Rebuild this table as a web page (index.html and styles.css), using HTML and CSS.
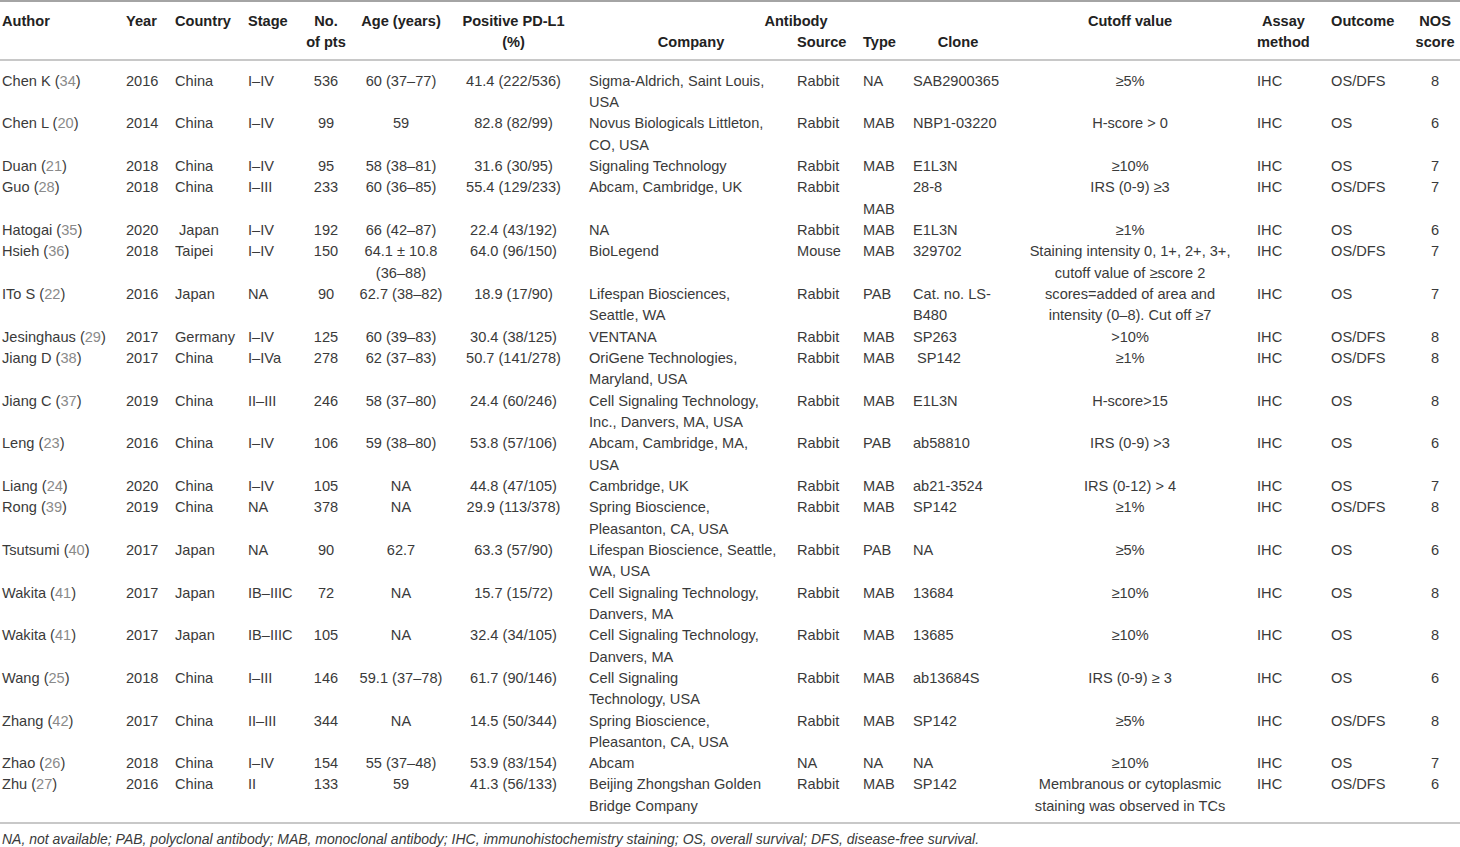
FILE: index.html
```html
<!DOCTYPE html>
<html lang="en">
<head>
<meta charset="utf-8">
<title>Table</title>
<link rel="stylesheet" href="styles.css">
</head>
<body>
<table class="tbl">
<colgroup>
<col class="c-author"><col class="c-year"><col class="c-country"><col class="c-stage"><col class="c-pts"><col class="c-age"><col class="c-pd"><col class="c-company"><col class="c-source"><col class="c-type"><col class="c-clone"><col class="c-cut"><col class="c-assay"><col class="c-out"><col class="c-nos">
</colgroup>
<thead>
<tr class="h1">
<th rowspan="2" class="l hb">Author</th>
<th rowspan="2" class="l hb">Year</th>
<th rowspan="2" class="l hb">Country</th>
<th rowspan="2" class="l hb">Stage</th>
<th rowspan="2" class="c hb">No.<br>of pts</th>
<th rowspan="2" class="c hb">Age (years)</th>
<th rowspan="2" class="c hb pd">Positive PD-L1<br>(%)</th>
<th colspan="4" class="c">Antibody</th>
<th rowspan="2" class="c hb">Cutoff value</th>
<th rowspan="2" class="l hb"><span class="stack">Assay<br>method</span></th>
<th rowspan="2" class="l hb">Outcome</th>
<th rowspan="2" class="c hb">NOS<br>score</th>
</tr>
<tr class="h2">
<th class="c hb">Company</th>
<th class="l hb">Source</th>
<th class="l hb">Type</th>
<th class="c hb">Clone</th>
</tr>
</thead>
<tbody>
<tr class="first"><td>Chen K (<span class="ref">34</span>)</td><td>2016</td><td>China</td><td>I–IV</td><td class="c">536</td><td class="c">60 (37–77)</td><td class="c pd">41.4 (222/536)</td><td>Sigma-Aldrich, Saint Louis,<br>USA</td><td>Rabbit</td><td>NA</td><td>SAB2900365</td><td class="c">≥5%</td><td>IHC</td><td>OS/DFS</td><td class="c">8</td></tr>
<tr><td>Chen L (<span class="ref">20</span>)</td><td>2014</td><td>China</td><td>I–IV</td><td class="c">99</td><td class="c">59</td><td class="c pd">82.8 (82/99)</td><td>Novus Biologicals Littleton,<br>CO, USA</td><td>Rabbit</td><td>MAB</td><td>NBP1-03220</td><td class="c">H-score &gt; 0</td><td>IHC</td><td>OS</td><td class="c">6</td></tr>
<tr><td>Duan (<span class="ref">21</span>)</td><td>2018</td><td>China</td><td>I–IV</td><td class="c">95</td><td class="c">58 (38–81)</td><td class="c pd">31.6 (30/95)</td><td>Signaling Technology</td><td>Rabbit</td><td>MAB</td><td>E1L3N</td><td class="c">≥10%</td><td>IHC</td><td>OS</td><td class="c">7</td></tr>
<tr><td>Guo (<span class="ref">28</span>)</td><td>2018</td><td>China</td><td>I–III</td><td class="c">233</td><td class="c">60 (36–85)</td><td class="c pd">55.4 (129/233)</td><td>Abcam, Cambridge, UK</td><td>Rabbit</td><td><br>MAB</td><td>28-8</td><td class="c">IRS (0-9) ≥3</td><td>IHC</td><td>OS/DFS</td><td class="c">7</td></tr>
<tr><td>Hatogai (<span class="ref">35</span>)</td><td>2020</td><td>&nbsp;Japan</td><td>I–IV</td><td class="c">192</td><td class="c">66 (42–87)</td><td class="c pd">22.4 (43/192)</td><td>NA</td><td>Rabbit</td><td>MAB</td><td>E1L3N</td><td class="c">≥1%</td><td>IHC</td><td>OS</td><td class="c">6</td></tr>
<tr><td>Hsieh (<span class="ref">36</span>)</td><td>2018</td><td>Taipei</td><td>I–IV</td><td class="c">150</td><td class="c">64.1 ± 10.8<br>(36–88)</td><td class="c pd">64.0 (96/150)</td><td>BioLegend</td><td>Mouse</td><td>MAB</td><td>329702</td><td class="c">Staining intensity 0, 1+, 2+, 3+,<br>cutoff value of ≥score 2</td><td>IHC</td><td>OS/DFS</td><td class="c">7</td></tr>
<tr><td>ITo S (<span class="ref">22</span>)</td><td>2016</td><td>Japan</td><td>NA</td><td class="c">90</td><td class="c">62.7 (38–82)</td><td class="c pd">18.9 (17/90)</td><td>Lifespan Biosciences,<br>Seattle, WA</td><td>Rabbit</td><td>PAB</td><td>Cat. no. LS-<br>B480</td><td class="c">scores=added of area and<br>intensity (0–8). Cut off ≥7</td><td>IHC</td><td>OS</td><td class="c">7</td></tr>
<tr><td>Jesinghaus (<span class="ref">29</span>)</td><td>2017</td><td>Germany</td><td>I–IV</td><td class="c">125</td><td class="c">60 (39–83)</td><td class="c pd">30.4 (38/125)</td><td>VENTANA</td><td>Rabbit</td><td>MAB</td><td>SP263</td><td class="c">&gt;10%</td><td>IHC</td><td>OS/DFS</td><td class="c">8</td></tr>
<tr><td>Jiang D (<span class="ref">38</span>)</td><td>2017</td><td>China</td><td>I–IVa</td><td class="c">278</td><td class="c">62 (37–83)</td><td class="c pd">50.7 (141/278)</td><td>OriGene Technologies,<br>Maryland, USA</td><td>Rabbit</td><td>MAB</td><td>&nbsp;SP142</td><td class="c">≥1%</td><td>IHC</td><td>OS/DFS</td><td class="c">8</td></tr>
<tr><td>Jiang C (<span class="ref">37</span>)</td><td>2019</td><td>China</td><td>II–III</td><td class="c">246</td><td class="c">58 (37–80)</td><td class="c pd">24.4 (60/246)</td><td>Cell Signaling Technology,<br>Inc., Danvers, MA, USA</td><td>Rabbit</td><td>MAB</td><td>E1L3N</td><td class="c">H-score&gt;15</td><td>IHC</td><td>OS</td><td class="c">8</td></tr>
<tr><td>Leng (<span class="ref">23</span>)</td><td>2016</td><td>China</td><td>I–IV</td><td class="c">106</td><td class="c">59 (38–80)</td><td class="c pd">53.8 (57/106)</td><td>Abcam, Cambridge, MA,<br>USA</td><td>Rabbit</td><td>PAB</td><td>ab58810</td><td class="c">IRS (0-9) &gt;3</td><td>IHC</td><td>OS</td><td class="c">6</td></tr>
<tr><td>Liang (<span class="ref">24</span>)</td><td>2020</td><td>China</td><td>I–IV</td><td class="c">105</td><td class="c">NA</td><td class="c pd">44.8 (47/105)</td><td>Cambridge, UK</td><td>Rabbit</td><td>MAB</td><td>ab21-3524</td><td class="c">IRS (0-12) &gt; 4</td><td>IHC</td><td>OS</td><td class="c">7</td></tr>
<tr><td>Rong (<span class="ref">39</span>)</td><td>2019</td><td>China</td><td>NA</td><td class="c">378</td><td class="c">NA</td><td class="c pd">29.9 (113/378)</td><td>Spring Bioscience,<br>Pleasanton, CA, USA</td><td>Rabbit</td><td>MAB</td><td>SP142</td><td class="c">≥1%</td><td>IHC</td><td>OS/DFS</td><td class="c">8</td></tr>
<tr><td>Tsutsumi (<span class="ref">40</span>)</td><td>2017</td><td>Japan</td><td>NA</td><td class="c">90</td><td class="c">62.7</td><td class="c pd">63.3 (57/90)</td><td>Lifespan Bioscience, Seattle,<br>WA, USA</td><td>Rabbit</td><td>PAB</td><td>NA</td><td class="c">≥5%</td><td>IHC</td><td>OS</td><td class="c">6</td></tr>
<tr><td>Wakita (<span class="ref">41</span>)</td><td>2017</td><td>Japan</td><td>IB–IIIC</td><td class="c">72</td><td class="c">NA</td><td class="c pd">15.7 (15/72)</td><td>Cell Signaling Technology,<br>Danvers, MA</td><td>Rabbit</td><td>MAB</td><td>13684</td><td class="c">≥10%</td><td>IHC</td><td>OS</td><td class="c">8</td></tr>
<tr><td>Wakita (<span class="ref">41</span>)</td><td>2017</td><td>Japan</td><td>IB–IIIC</td><td class="c">105</td><td class="c">NA</td><td class="c pd">32.4 (34/105)</td><td>Cell Signaling Technology,<br>Danvers, MA</td><td>Rabbit</td><td>MAB</td><td>13685</td><td class="c">≥10%</td><td>IHC</td><td>OS</td><td class="c">8</td></tr>
<tr><td>Wang (<span class="ref">25</span>)</td><td>2018</td><td>China</td><td>I–III</td><td class="c">146</td><td class="c">59.1 (37–78)</td><td class="c pd">61.7 (90/146)</td><td>Cell Signaling<br>Technology, USA</td><td>Rabbit</td><td>MAB</td><td>ab13684S</td><td class="c">IRS (0-9) ≥ 3</td><td>IHC</td><td>OS</td><td class="c">6</td></tr>
<tr><td>Zhang (<span class="ref">42</span>)</td><td>2017</td><td>China</td><td>II–III</td><td class="c">344</td><td class="c">NA</td><td class="c pd">14.5 (50/344)</td><td>Spring Bioscience,<br>Pleasanton, CA, USA</td><td>Rabbit</td><td>MAB</td><td>SP142</td><td class="c">≥5%</td><td>IHC</td><td>OS/DFS</td><td class="c">8</td></tr>
<tr><td>Zhao (<span class="ref">26</span>)</td><td>2018</td><td>China</td><td>I–IV</td><td class="c">154</td><td class="c">55 (37–48)</td><td class="c pd">53.9 (83/154)</td><td>Abcam</td><td>NA</td><td>NA</td><td>NA</td><td class="c">≥10%</td><td>IHC</td><td>OS</td><td class="c">7</td></tr>
<tr class="last"><td>Zhu (<span class="ref">27</span>)</td><td>2016</td><td>China</td><td>II</td><td class="c">133</td><td class="c">59</td><td class="c pd">41.3 (56/133)</td><td>Beijing Zhongshan Golden<br>Bridge Company</td><td>Rabbit</td><td>MAB</td><td>SP142</td><td class="c">Membranous or cytoplasmic<br>staining was observed in TCs</td><td>IHC</td><td>OS/DFS</td><td class="c">6</td></tr>
</tbody>
</table>
<p class="note">NA, not available; PAB, polyclonal antibody; MAB, monoclonal antibody; IHC, immunohistochemistry staining; OS, overall survival; DFS, disease-free survival.</p>
</body>
</html>
```
FILE: styles.css
```css
html, body {
  margin: 0;
  padding: 0;
  background: #ffffff;
}
body {
  font-family: "Liberation Sans", Arial, sans-serif;
  color: #3a3a3a;
}
.tbl {
  width: 1460px;
  table-layout: fixed;
  border-collapse: separate;
  border-spacing: 0;
  border-top: 2px solid #a4a4a4;
  border-bottom: 2px solid #c8c8c8;
  font-size: 14.6px;
  line-height: 21.33px;
}
.c-author { width: 124px; }
.c-year { width: 49px; }
.c-country { width: 73px; }
.c-stage { width: 52px; }
.c-pts { width: 56px; }
.c-age { width: 94px; }
.c-pd { width: 139px; }
.c-company { width: 208px; }
.c-source { width: 66px; }
.c-type { width: 50px; }
.c-clone { width: 94px; }
.c-cut { width: 250px; }
.c-assay { width: 74px; }
.c-out { width: 81px; }
.c-nos { width: 50px; }

th, td {
  padding: 0 0 0 2px;
  white-space: nowrap;
  vertical-align: top;
  text-align: left;
}
th {
  font-weight: bold;
  color: #222222;
}
.h1 th { padding-top: 9px; }
.h2 th { padding-bottom: 5px; }
.h1 th.hb { padding-bottom: 5px; }
th.hb { border-bottom: 2px solid #c8c8c8; }
.c { text-align: center; padding-left: 0; }
.l { text-align: left; }
.pd { padding-right: 8px; }
.stack {
  display: inline-block;
  text-align: center;
}
.first td { padding-top: 10px; }
.last td { padding-bottom: 5px; }
.ref { color: #8a8a8a; }
.note {
  margin: 0;
  padding: 7px 0 0 2px;
  font-size: 14px;
  line-height: 16px;
  font-style: italic;
  color: #3a3a3a;
}
```
